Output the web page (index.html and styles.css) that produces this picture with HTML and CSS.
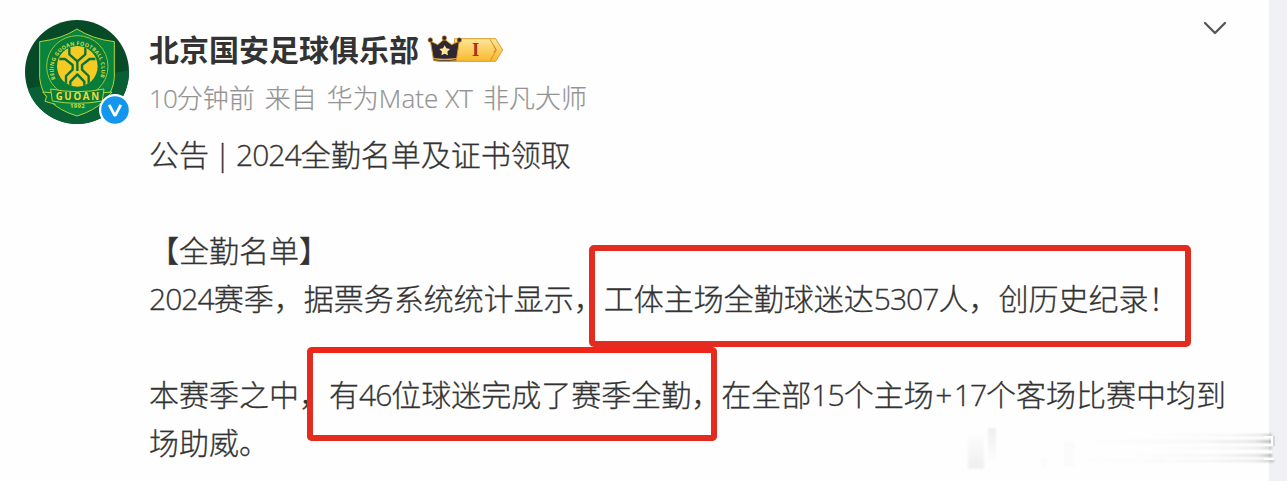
FILE: index.html
```html
<!DOCTYPE html>
<html lang="zh-CN">
<head>
    <meta charset="UTF-8">
    <meta name="viewport" content="width=device-width, initial-scale=1.0">
    <title>北京国安足球俱乐部</title>
    <link rel="stylesheet" href="styles.css">
</head>
<body>
    <article class="card">
        <div class="avatar">
            <svg viewBox="30 29 312 312" width="104" height="104">
                <defs>
                    <clipPath id="round"><circle cx="186" cy="185" r="156"/></clipPath>
                    <clipPath id="ball"><circle cx="187" cy="168" r="61"/></clipPath>
                    <path id="ring" d="M123 209 A72 72 0 1 1 252 209"/>
                </defs>
                <g clip-path="url(#round)">
                    <rect x="30" y="29" width="312" height="312" fill="#064a27"/>
                    <path d="M30 236 L342 180 V341 H30Z" fill="#096034"/>
                    <path d="M186 56 Q232 86 298 94 V202 Q292 284 186 317 Q80 284 74 202 V94 Q140 86 186 56Z" fill="#08843c" stroke="#b5d43c" stroke-width="3"/>
                    <circle cx="187" cy="168" r="92" fill="#087c39" stroke="#b5d43c" stroke-width="2.5"/>
                    <circle cx="187" cy="168" r="61" fill="#f5ca22"/>
                    <g clip-path="url(#ball)" fill="none" stroke="#08743a" stroke-width="7" stroke-linejoin="round">
                        <path d="M133 146 H150 L173 164 V178 L153 197 V224"/>
                        <path d="M241 146 H224 L201 164 V178 L221 197 V224"/>
                        <path d="M163 104 V132 L187 153 L211 132 V104"/>
                        <path d="M187 153 V182"/>
                        <path d="M166 234 V214 L187 192 L208 214 V234"/>
                    </g>
                    <text class="ring-text" textLength="280"><textPath href="#ring" startOffset="3">BEIJING GUOAN FOOTBALL CLUB</textPath></text>
                    <path d="M118 248 L83 245 L95 258 L90 273 L122 282 M256 248 L291 245 L279 258 L284 273 L252 282" fill="#07743a" stroke="#b5d43c" stroke-width="3"/>
                    <path d="M107 236 Q187 252 267 236 L262 272 Q187 286 112 272Z" fill="#087b39" stroke="#b5d43c" stroke-width="3"/>
                    <text class="club" x="187" y="270" textLength="130">GUOAN</text>
                    <text class="year" x="187" y="294" textLength="44">1992</text>
                </g>
            </svg>
            <svg class="verified" viewBox="0 0 32 32" width="32" height="32">
                <circle cx="16" cy="16" r="16" fill="#fff"/>
                <circle cx="16" cy="16" r="13.8" fill="#1296ee"/>
                <path d="M10.2 10.8 L15.6 21.2 H16.4 L21.8 10.8" fill="none" stroke="#fff" stroke-width="2.8" stroke-linejoin="round"/>
            </svg>
        </div>

        <div class="main">
            <header class="head">
                <h1 class="name">北京国安足球俱乐部</h1>
                <svg class="level" viewBox="22 30 231 84" width="77" height="28">
                    <defs>
                        <linearGradient id="gold" x1="0" y1="0" x2="0" y2="1">
                            <stop offset="0" stop-color="#ffe69a"/>
                            <stop offset="1" stop-color="#f9b82d"/>
                        </linearGradient>
                    </defs>
                    <path d="M105 41 H228 L249 75 L228 109 H100Z" fill="url(#gold)" stroke="#dc9a2a" stroke-width="3"/>
                    <path d="M211 43 L230 75 L212 107" fill="none" stroke="#de8c22" stroke-width="3"/>
                    <path d="M222 66 L229 73 L222 82" fill="none" stroke="#de7c22" stroke-width="3"/>
                    <path d="M32 48 L54 59 L74 42 L96 59 L119 48 L110 107 Q75 112 42 107Z" fill="#302733" stroke="#d69a32" stroke-width="3"/>
                    <path d="M42 101 Q75 106 110 101" fill="none" stroke="#e4ad45" stroke-width="4"/>
                    <g fill="#352a35" stroke="#c99335" stroke-width="2">
                        <circle cx="32" cy="45" r="7"/>
                        <circle cx="74" cy="39" r="7"/>
                        <circle cx="119" cy="45" r="7"/>
                    </g>
                    <path d="M75 61 L80 70 L91 72 L83 80 L85 91 L75 86 L65 91 L67 80 L59 72 L70 70Z" fill="#ffe59b"/>
                    <text class="level-text" x="168" y="93">I</text>
                </svg>
                <svg class="arrow" viewBox="0 0 24 14" width="24" height="14">
                    <path d="M2 2 L12 12 L22 2" fill="none" stroke="#555" stroke-width="2.3" stroke-linecap="round" stroke-linejoin="round"/>
                </svg>
            </header>
            <div class="meta">
                <span><span class="num">10</span>分钟前</span>
                <span>来自</span>
                <span>华为<span class="latin">Mate XT</span></span>
                <span>非凡大师</span>
            </div>
            <div class="text">
                <p>公告<span class="bar">|</span><span class="num">2024</span>全勤名单及证书领取</p>
                <p><br></p>
                <p>【全勤名单】</p>
                <p><span class="num">2024</span>赛季，据票务系统统计显示，<span class="mark">工体主场全勤球迷达<span class="num">5307</span>人，创历史纪录！<i class="box box-record"></i></span></p>
                <p><br></p>
                <p>本赛季之中，<span class="mark">有<span class="num">46</span>位球迷完成了赛季全勤，<i class="box box-fans"></i></span>在全部<span class="num">15</span>个主场<span class="plus">+</span><span class="num">17</span>个客场比赛中均到</p>
                <p>场助威。</p>
            </div>
        </div>
    </article>

    <svg class="watermark" viewBox="0 0 337 71" width="337" height="71">
        <defs>
            <linearGradient id="fade" x1="0" x2="1">
                <stop offset="0" stop-color="#999" stop-opacity="0"/>
                <stop offset=".6" stop-color="#999" stop-opacity=".08"/>
                <stop offset=".9" stop-color="#888" stop-opacity=".22"/>
                <stop offset="1" stop-color="#777" stop-opacity=".55"/>
            </linearGradient>
            <linearGradient id="down" x1="0" x2="0" y1="0" y2="1">
                <stop offset="0" stop-color="#ddd" stop-opacity=".05"/>
                <stop offset="1" stop-color="#ddd" stop-opacity=".45"/>
            </linearGradient>
            <linearGradient id="up" x1="0" x2="0" y1="0" y2="1">
                <stop offset="0" stop-color="#ddd" stop-opacity=".45"/>
                <stop offset="1" stop-color="#ddd" stop-opacity=".05"/>
            </linearGradient>
            <filter id="soft"><feGaussianBlur stdDeviation="1"/></filter>
        </defs>
        <g filter="url(#soft)">
            <rect x="18" y="24" width="16" height="35" fill="url(#down)"/>
            <rect x="38" y="18" width="8" height="32" fill="url(#up)"/>
            <rect x="91" y="48" width="6" height="9" fill="#fbfbfb"/>
            <rect x="114" y="32" width="11" height="25" fill="#fbfbfb"/>
            <rect x="200" y="24" width="122" height="2" fill="url(#fade)"/>
            <rect x="140" y="30" width="182" height="3" fill="url(#fade)"/>
            <rect x="200" y="37" width="122" height="2" fill="url(#fade)"/>
            <rect x="180" y="44" width="142" height="3" fill="url(#fade)"/>
            <rect x="130" y="50" width="194" height="2" fill="url(#fade)"/>
        </g>
        <path d="M314 27 H322 V35 H314 M314 42 H322 M314 49 H324" fill="none" stroke="#fff" stroke-width="2"/>
        <path d="M324 26 V36" fill="none" stroke="#bbb" stroke-width="1"/>
    </svg>
</body>
</html>
```
FILE: styles.css
```css
* { box-sizing: border-box; }
body { margin: 0; height: 481px; overflow: hidden; background: #f0f1f5; color: #333; font-family: "Noto Sans CJK SC", sans-serif; }
h1, p { margin: 0; }
svg { display: block; }

.card { display: flex; gap: 20px; width: 1269px; height: 481px; padding: 20px 42px 0 25px; background: #fefefe; }
.avatar { position: relative; flex: none; width: 104px; height: 104px; }
.verified { position: absolute; left: 74px; top: 74px; }
.main { flex: 1; }

.ring-text { font: bold 16px "Open Sans", sans-serif; fill: #c9dc4a; }
.club { font: bold 29px "Open Sans", sans-serif; fill: #efdc3c; text-anchor: middle; }
.year { font: bold 18px "Open Sans", sans-serif; fill: #c9dc4a; text-anchor: middle; }

.head { display: flex; align-items: center; height: 60px; }
.name { margin-top: -4px; font-size: 30px; line-height: 60px; font-weight: bold; }
.level { margin: -2px 0 0 8px; }
.level-text { font: bold 56px "Liberation Serif", serif; fill: #a8321b; text-anchor: middle; }
.arrow { margin: -44px 0 0 auto; }

.meta { display: flex; gap: 10px; height: 36px; line-height: 34px; font-size: 26px; font-weight: 300; color: #939393; -webkit-text-stroke: 0.2px #939393; }
.text { margin-top: 13px; font-size: 30px; line-height: 48px; font-weight: 300; white-space: nowrap; -webkit-text-stroke: 0.3px #333; }
.text p { height: 48px; }
.num, .latin, .bar, .plus { font-family: "Open Sans", sans-serif; }
.num { letter-spacing: -0.95px; }
.latin { letter-spacing: 0.1px; }
.bar { display: inline-block; width: 27px; text-align: center; }
.plus { display: inline-block; width: 20px; text-align: center; }

/* red frames drawn over the text */
.mark { position: relative; }
.box { position: absolute; border: 6px solid #e42b20; border-radius: 5px; }
.box-record { left: -15px; top: -30px; width: 602px; height: 102px; }
.box-fans { left: -22px; top: -24px; width: 410px; height: 94px; border-top-color: #f0251a; }

.watermark { position: absolute; left: 950px; top: 410px; }
```
